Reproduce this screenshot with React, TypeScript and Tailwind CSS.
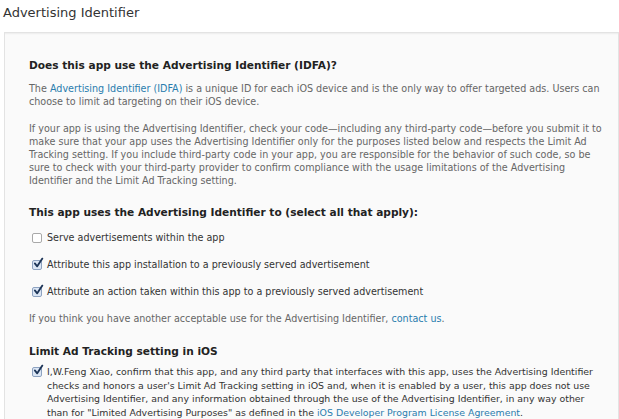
import React from "react";

const Check = ({ on }: { on: boolean }) => (
  <span className="relative mt-[2px] inline-block h-[10px] w-[10px] shrink-0">
    <span
      className={
        "absolute inset-0 rounded-[2px] border " +
        (on ? "border-[#8da2c0] bg-[#dbe6f5]" : "border-[#a9a9a9] bg-white")
      }
    />
    {on && (
      <svg viewBox="0 0 12 12" className="absolute left-[1px] top-[-3px] h-[12px] w-[11px]">
        <path d="M2 6.5 L4.6 9.6 L10.2 1.2" fill="none" stroke="#1d3558" strokeWidth="2" strokeLinecap="round" strokeLinejoin="round" />
      </svg>
    )}
  </span>
);

const Row = ({ on, children }: { on: boolean; children: React.ReactNode }) => (
  <div className="flex items-start gap-[5px] pl-[3px] text-[#333] leading-[13px]">
    <Check on={on} />
    <div>{children}</div>
  </div>
);

export default function App() {
  return (
    <div className="h-[419px] w-[619px] overflow-hidden bg-white font-['DejaVu_Sans',sans-serif] text-[9.6px]">
      <div className="pl-[3px] pt-[4px] text-[13px] leading-[18px] text-[#333]">Advertising Identifier</div>

      <div className="ml-[4px] mt-[10px] border border-[#e3e3e3] bg-[#fafafa] pl-[24px] pt-[25px] shadow-[inset_0_3px_2px_-2px_rgba(0,0,0,0.06)]">
        <h2 className="text-[10.6px] font-bold leading-[14px] text-[#222]">Does this app use the Advertising Identifier (IDFA)?</h2>

        <div className="mt-[10px] leading-[13px] text-[#666] whitespace-nowrap">
          The <span className="text-[#2a7dae]">Advertising Identifier (IDFA)</span> is a unique ID for each iOS device and is the only way to offer targeted ads. Users can
          <br />
          choose to limit ad targeting on their iOS device.
        </div>

        <div className="mt-[14px] leading-[13px] text-[#666] whitespace-nowrap">
          If your app is using the Advertising Identifier, check your code—including any third-party code—before you submit it to
          <br />
          make sure that your app uses the Advertising Identifier only for the purposes listed below and respects the Limit Ad
          <br />
          Tracking setting. If you include third-party code in your app, you are responsible for the behavior of such code, so be
          <br />
          sure to check with your third-party provider to confirm compliance with the usage limitations of the Advertising
          <br />
          Identifier and the Limit Ad Tracking setting.
        </div>

        <h2 className="mt-[18px] text-[10.6px] font-bold leading-[14px] text-[#222]">
          This app uses the Advertising Identifier to (select all that apply):
        </h2>

        <div className="mt-[12px] flex flex-col gap-[14px]">
          <Row on={false}>Serve advertisements within the app</Row>
          <Row on>Attribute this app installation to a previously served advertisement</Row>
          <Row on>Attribute an action taken within this app to a previously served advertisement</Row>
          <div className="leading-[13px] text-[#666]">
            If you think you have another acceptable use for the Advertising Identifier,{" "}
            <span className="text-[#2a7dae]">contact us</span>.
          </div>
        </div>

        <h2 className="mt-[19px] text-[10.6px] font-bold leading-[14px] text-[#222]">Limit Ad Tracking setting in iOS</h2>

        <div className="mt-[7px] whitespace-nowrap text-[9.4px]">
          <Row on>
            <span className="leading-[13.5px]">
              I,W.Feng Xiao, confirm that this app, and any third party that interfaces with this app, uses the Advertising Identifier
              <br />
              checks and honors a user's Limit Ad Tracking setting in iOS and, when it is enabled by a user, this app does not use
              <br />
              Advertising Identifier, and any information obtained through the use of the Advertising Identifier, in any way other
              <br />
              than for "Limited Advertising Purposes" as defined in the{" "}
              <span className="text-[#2a7dae]">iOS Developer Program License Agreement</span>.
            </span>
          </Row>
        </div>
        <div className="h-[40px]" />
      </div>
    </div>
  );
}
